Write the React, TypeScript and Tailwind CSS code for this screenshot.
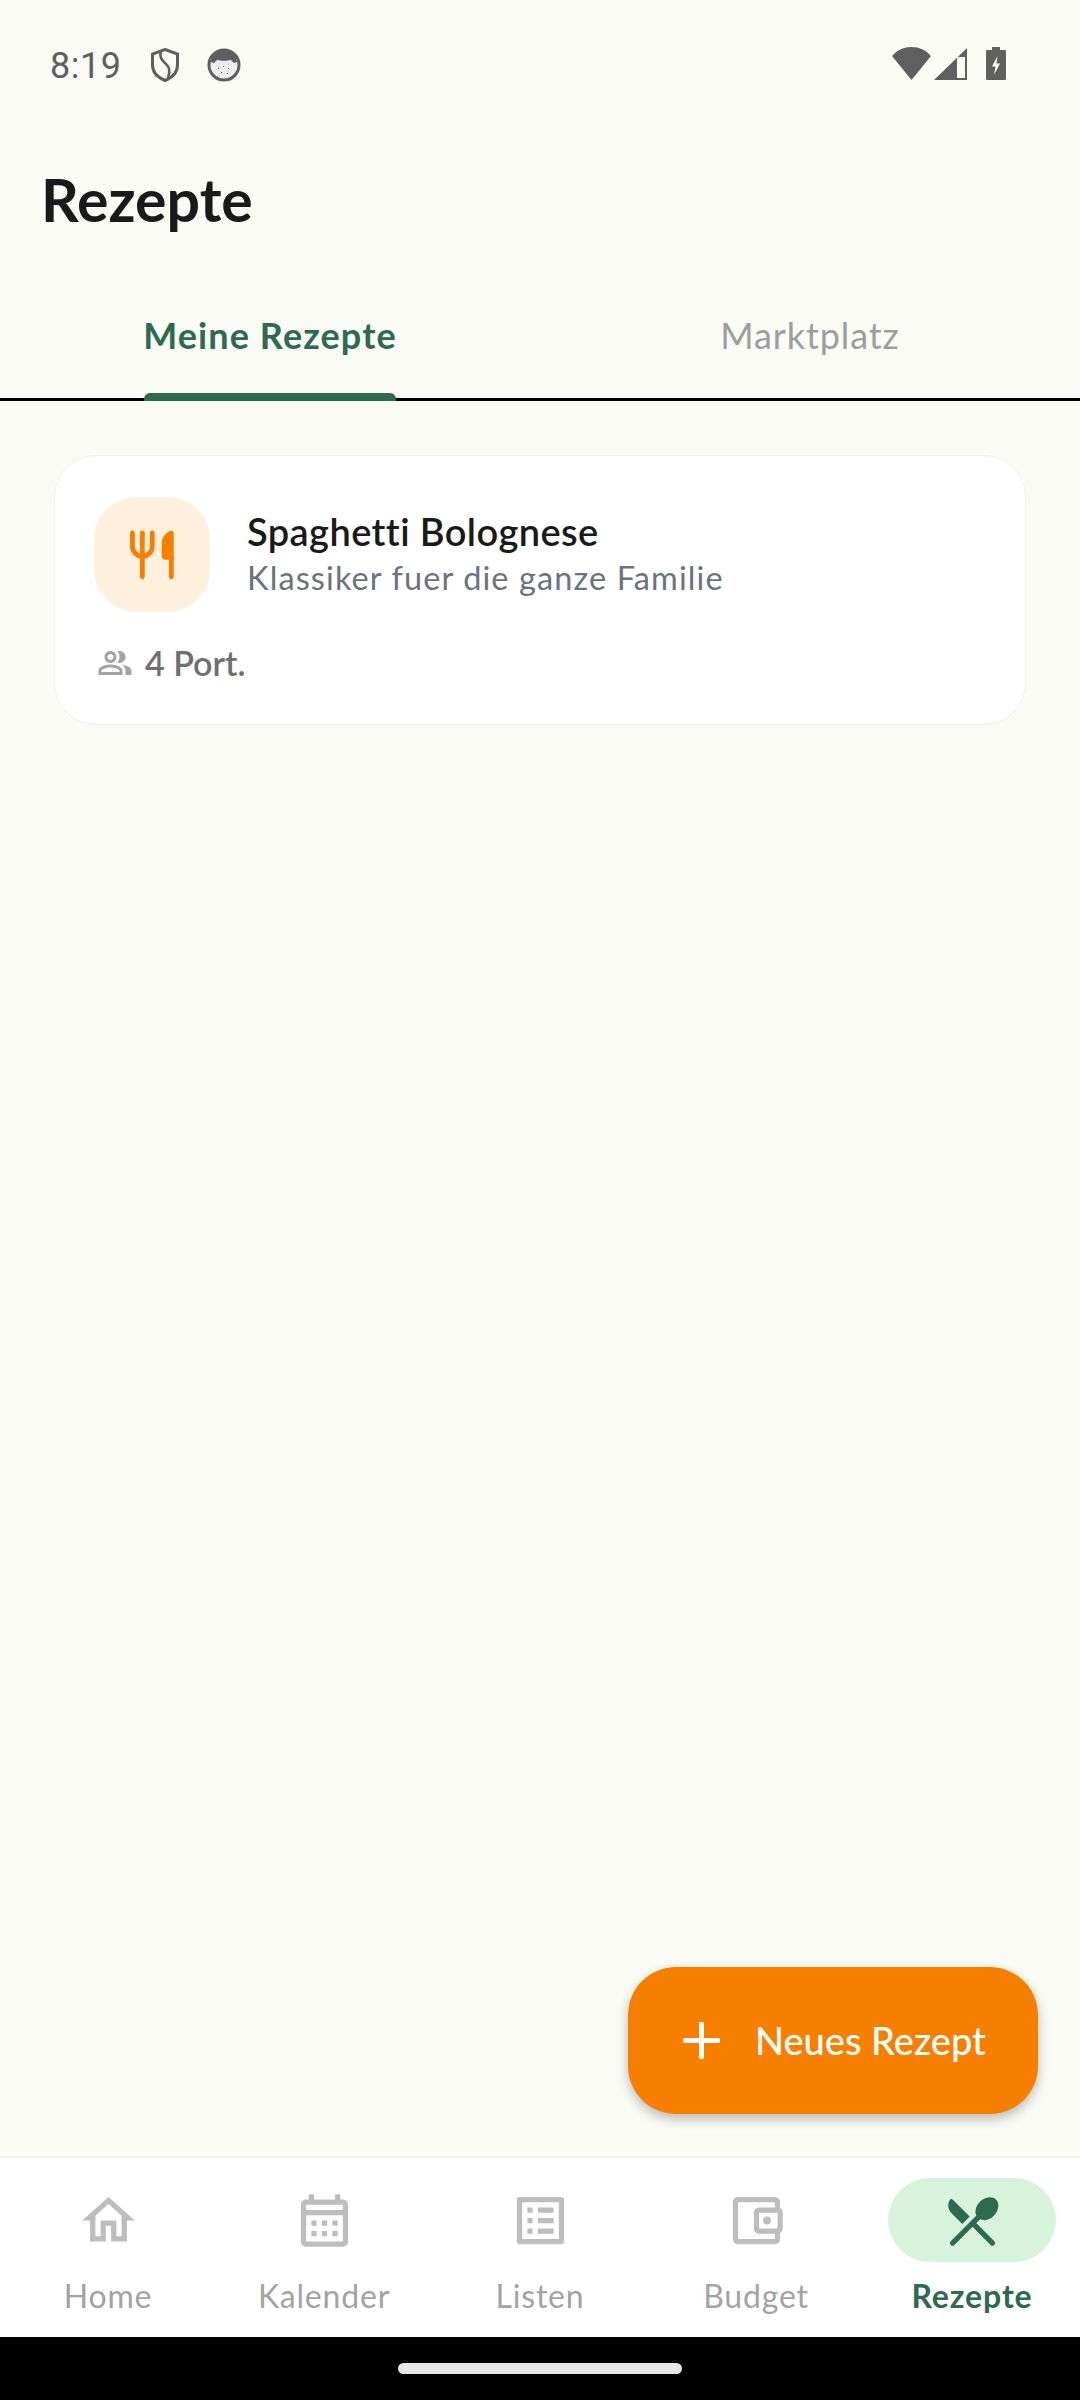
const font = "font-['Lato','Noto_Sans',sans-serif]";

function NavIcon({ d, extra }: { d: string; extra?: React.ReactNode }): React.JSX.Element {
  return (
    <svg viewBox="0 0 24 24" className="h-[63px] w-[63px] fill-[#bdbdbd]" aria-hidden>
      <path d={d} />
      {extra}
    </svg>
  );
}

const navItems = [
  {
    label: "Home",
    d: "M12 5.69l5 4.5V18h-2v-6H9v6H7v-7.81l5-4.5M12 3L2 12h3v8h6v-6h2v6h6v-8h3L12 3z",
  },
  {
    label: "Kalender",
    d: "M19 4h-1V2h-2v2H8V2H6v2H5c-1.1 0-2 .9-2 2v14c0 1.1.9 2 2 2h14c1.1 0 2-.9 2-2V6c0-1.1-.9-2-2-2zm0 16H5V10h14v10zm0-12H5V6h14v2zM9 14H7v-2h2v2zm4 0h-2v-2h2v2zm4 0h-2v-2h2v2zm-8 4H7v-2h2v2zm4 0h-2v-2h2v2zm4 0h-2v-2h2v2z",
  },
  {
    label: "Listen",
    d: "M19 5v14H5V5h14m1.1-2H3.9c-.5 0-.9.4-.9.9v16.2c0 .4.4.9.9.9h16.2c.4 0 .9-.5.9-.9V3.9c0-.5-.5-.9-.9-.9zM11 7h6v2h-6V7zm0 4h6v2h-6v-2zm0 4h6v2h-6zM7 7h2v2H7zm0 4h2v2H7zm0 4h2v2H7z",
  },
  {
    label: "Budget",
    d: "M21 7.28V5c0-1.1-.9-2-2-2H5c-1.11 0-2 .9-2 2v14c0 1.1.89 2 2 2h14c1.1 0 2-.9 2-2v-2.28c.59-.35 1-.98 1-1.72V9c0-.74-.41-1.37-1-1.72zM20 9v6h-7V9h7zM5 19V5h14v2h-6c-1.1 0-2 .9-2 2v6c0 1.1.9 2 2 2h6v2H5z",
    extra: <circle cx="16" cy="12" r="1.5" />,
  },
];

function StatusBar(): React.JSX.Element {
  return (
    <div className="flex h-[100px] items-start justify-between pl-[50px] pr-[74px] pt-[47px] text-[#5f5f5f]">
      <div className="flex items-start">
        <span className="mt-[2px] w-[100px] font-['Roboto',sans-serif] text-[36px] leading-[35px] tracking-[0.5px]">8:19</span>
        <svg viewBox="0 0 30 34" className="mt-[1px] h-[34px] w-[30px]" aria-hidden>
          <path
            d="M15 1.500 27.500 6v11c0 7-5 12.500-12.500 15.500C7.500 29.500 2.500 24 2.500 17V6z"
            fill="none"
            stroke="currentColor"
            strokeWidth="3"
          />
          <path d="M11 3c-2 6 1 9 4 12s6 5 3 15" fill="none" stroke="currentColor" strokeWidth="2.600" />
        </svg>
        <svg viewBox="0 0 34 34" className="ml-[27px] mt-[1px] h-[34px] w-[34px]" aria-hidden>
          <circle cx="17" cy="17" r="15" fill="#ededed" stroke="currentColor" strokeWidth="3" />
          <path d="M4 14C5 6 10 2 17 2s12 4 13 12l-3 1-3-3c-4 1-10 1-14 0l-3 3z" fill="currentColor" />
          <path d="M11 20h1v1h-1zM16 18h1v1h-1zM21 20h1v1h-1zM14 24h1v1h-1zM20 25h1v1h-1z" fill="currentColor" />
        </svg>
      </div>
      <div className="flex items-start">
        <svg viewBox="0 0 39 33" className="h-[33px] w-[39px]" aria-hidden>
          <path d="M0 9C5 3 12 0 19.500 0S34 3 39 9L19.500 33z" fill="currentColor" />
        </svg>
        <svg viewBox="0 0 33 32" className="ml-[3px] mt-[1px] h-[32px] w-[33px]" aria-hidden>
          <path d="M33 0v32H0z" fill="currentColor" />
          <path d="M23 9h8v21h-8z" fill="#fafbf5" />
        </svg>
        <svg viewBox="0 0 20 33" className="ml-[19px] h-[33px] w-[20px]" aria-hidden>
          <path d="M6 0h8v3h5a1 1 0 0 1 1 1v28a1 1 0 0 1-1 1H1a1 1 0 0 1-1-1V4a1 1 0 0 1 1-1h5z" fill="currentColor" />
          <path d="M11.500 9 6 19.500h3.500L8 28l6-11.500h-3.500z" fill="#fafbf5" />
        </svg>
      </div>
    </div>
  );
}

function RecipeCard(): React.JSX.Element {
  return (
    <div className="mx-[54px] mt-[54px] h-[270px] rounded-[42px] border-[1.5px] border-[#f0f1ec] bg-white pl-[39px] pr-[30px] pt-[41px]">
      <div className="flex items-center">
        <div className="flex h-[115px] w-[116px] items-center justify-center rounded-[42px] bg-[#fff0dd]">
          <svg viewBox="0 0 24 24" className="h-[58px] w-[58px] fill-[#f77f00]" aria-hidden>
            <path
              d="M3.900 2.900V8.500a4.100 4.100 0 0 0 8.200 0V2.900M8 2.900V21"
              fill="none"
              stroke="#f77f00"
              strokeWidth="2"
              strokeLinecap="round"
            />
            <path d="M16 7c0-2.500 2-4.500 4-5 .6-.1 1 .3 1 1v11h-3.500c-.8 0-1.500-.7-1.500-1.500z" />
            <path d="M20 13v8" fill="none" stroke="#f77f00" strokeWidth="2" strokeLinecap="round" />
          </svg>
        </div>
        <div className="-mt-[3px] ml-[37px]">
          <div className="text-[38px] font-semibold leading-[46px] tracking-[0.4px] text-[#1a1a1a]">Spaghetti Bolognese</div>
          <div className="mt-[4px] text-[32.500px] leading-[40px] tracking-[1.1px] text-[#6b7280]">Klassiker fuer die ganze Familie</div>
        </div>
      </div>
      <div className="ml-[3px] mt-[31px] flex items-center">
        <svg viewBox="0 0 24 24" className="h-[36px] w-[36px] fill-[#a3a3a3]" aria-hidden>
          <path d="M16.670 13.130C18.040 14.060 19 15.320 19 17v3h4v-3c0-2.180-3.570-3.470-6.330-3.870zM9 12c2.210 0 4-1.790 4-4s-1.790-4-4-4-4 1.790-4 4 1.790 4 4 4zm0-6c1.100 0 2 .9 2 2s-.9 2-2 2-2-.9-2-2 .9-2 2-2zM15 12c2.210 0 4-1.790 4-4s-1.790-4-4-4c-.47 0-.91.1-1.330.24C14.500 5.270 15 6.580 15 8s-.5 2.730-1.330 3.760c.42.14.86.24 1.330.24zM9 13c-2.670 0-8 1.340-8 4v3h16v-3c0-2.660-5.330-4-8-4zm6 5H3v-.99C3.200 16.290 6.300 15 9 15s5.800 1.290 6 2z" />
        </svg>
        <span className="ml-[12px] text-[34px] font-semibold leading-[40px] text-[#6f6f6f]">4 Port.</span>
      </div>
    </div>
  );
}

function BottomNav(): React.JSX.Element {
  return (
    <nav className="grid h-[181px] grid-cols-5 border-t-2 border-[#f3f4ef] bg-white pt-[20px]">
      {navItems.map((item) => (
        <div key={item.label} className="flex flex-col items-center">
          <div className="flex h-[84px] w-[168px] items-center justify-center">
            <NavIcon d={item.d} extra={item.extra} />
          </div>
          <span className="mt-[14px] text-[32px] leading-[40px] tracking-[0.8px] text-[#a3a3a3]">{item.label}</span>
        </div>
      ))}
      <div className="flex flex-col items-center">
        <div className="flex h-[84px] w-[168px] items-center justify-center rounded-full bg-[#d8f3dc]">
          <svg viewBox="0 0 24 24" className="h-[63px] w-[63px] fill-[#2d6a4f]" aria-hidden>
            <path d="M8.100 13.340l2.830-2.830L4.400 4c-.3-.3-.8-.3-1 .1-1 1.600-.8 3.700.51 5.060z" />
            <path d="M14.880 11.530c1.530.71 3.680.21 5.270-1.380 1.910-1.910 2.280-4.650.81-6.120-1.460-1.460-4.200-1.100-6.120.81-1.590 1.590-2.090 3.740-1.380 5.270z" />
            <path d="M4.400 20.600 14.400 10.600M12.700 13.700 19.600 20.600" stroke="#2d6a4f" strokeWidth="2" strokeLinecap="round" fill="none" />
          </svg>
        </div>
        <span className="mt-[14px] text-[32px] font-bold leading-[40px] tracking-[0.9px] text-[#2d6a4f]">Rezepte</span>
      </div>
    </nav>
  );
}

export default function App(): React.JSX.Element {
  return (
    <div className={`relative flex h-[2400px] w-[1080px] flex-col overflow-hidden bg-[#fafbf5] ${font}`}>
      <StatusBar />
      <h1 className="pl-[41px] pt-[65px] text-[59px] font-bold leading-[70px] text-[#1a1a1a]">Rezepte</h1>
      <div className="mt-[66px] grid h-[100px] grid-cols-2 border-b-[3px] border-black">
        <div className="relative flex items-center justify-center pb-[29px] text-[36px] font-bold tracking-[1.1px] text-[#2d6a4f]">
          <span>Meine Rezepte</span>
          <div className="absolute bottom-[-3px] left-[144px] h-[8px] w-[252px] rounded-t-[6px] bg-[#2d6a4f]" />
        </div>
        <div className="flex items-center justify-center pb-[29px] text-[36px] tracking-[0.9px] text-[#9e9e9e]">Marktplatz</div>
      </div>
      <main className="flex-1">
        <RecipeCard />
      </main>
      <BottomNav />
      <div className="flex h-[63px] items-start justify-center bg-black pt-[26px]">
        <div className="h-[11px] w-[284px] rounded-full bg-[#e6e6e6]" />
      </div>
      <button
        type="button"
        className="absolute left-[628px] top-[1967px] flex h-[147px] w-[410px] items-center rounded-[48px] bg-[#f77f00] pl-[55px] text-white shadow-[0_5px_12px_rgba(0,0,0,0.25)]"
      >
        <svg viewBox="0 0 37 37" className="h-[37px] w-[37px]" aria-hidden>
          <path d="M18.500 2v33M2 18.500h33" stroke="currentColor" strokeWidth="5" strokeLinecap="round" />
        </svg>
        <span className="ml-[35px] text-[38px] font-medium">Neues Rezept</span>
      </button>
    </div>
  );
}
